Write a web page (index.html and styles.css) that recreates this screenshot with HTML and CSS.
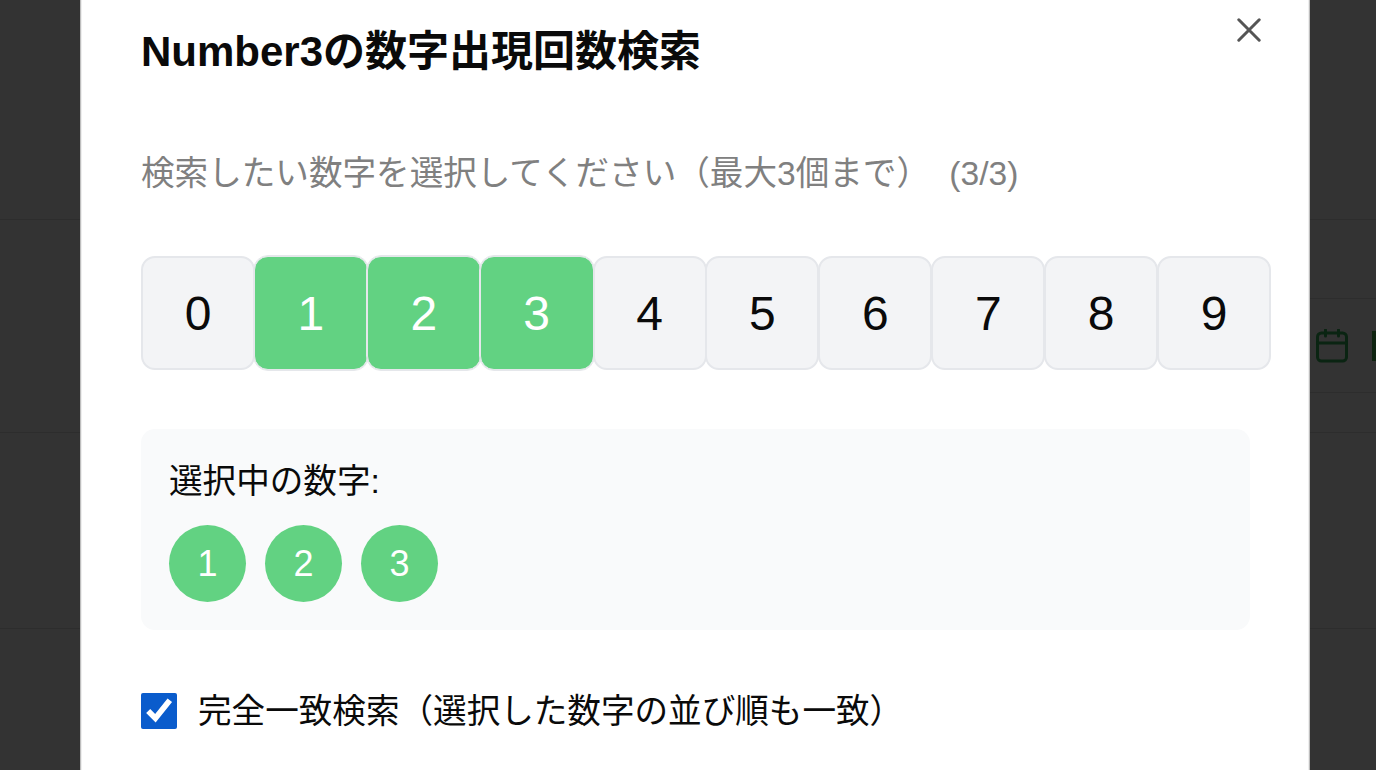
FILE: index.html
```html
<!DOCTYPE html>
<html lang="ja">
<head>
    <title>Number3の数字出現回数検索</title>
    <link rel="stylesheet" href="styles.css">
</head>
<body>
    <div class="page">
        <div class="row row-head"></div>
        <div class="row row-tabs">
            <div class="band band-a"></div>
            <div class="band band-b">
                <div class="page-icons">
                    <svg class="cal-icon" viewBox="0 0 32 34" width="32" height="34">
                        <rect x="1.5" y="4" width="29" height="28" rx="4"></rect>
                        <path d="M1.5 14h29M9.500 1v6M22.500 1v6"></path>
                    </svg>
                    <span class="cal-next"></span>
                </div>
            </div>
            <div class="band band-c"></div>
        </div>
        <div class="row row-body"></div>
    </div>

    <div class="overlay">
        <div class="modal">
            <button class="close-btn" type="button" aria-label="閉じる">
                <svg viewBox="0 0 24 24" width="24" height="24">
                    <path d="M1.800 1.800l20.400 20.400M22.200 1.800l-20.400 20.400"></path>
                </svg>
            </button>
            <h2 class="modal-title">Number3の数字出現回数検索</h2>
            <p class="hint">検索したい数字を選択してください（最大3個まで） <span class="hint-count">(3/3)</span></p>
            <div class="digit-grid">
                <button class="digit" type="button">0</button>
                <button class="digit is-on" type="button">1</button>
                <button class="digit is-on" type="button">2</button>
                <button class="digit is-on" type="button">3</button>
                <button class="digit" type="button">4</button>
                <button class="digit" type="button">5</button>
                <button class="digit" type="button">6</button>
                <button class="digit" type="button">7</button>
                <button class="digit" type="button">8</button>
                <button class="digit" type="button">9</button>
            </div>
            <div class="selected-panel">
                <div class="selected-label">選択中の数字:</div>
                <div class="selected-list">
                    <span class="ball">1</span>
                    <span class="ball">2</span>
                    <span class="ball">3</span>
                </div>
            </div>
            <label class="exact-row">
                <input type="checkbox" class="exact-check" checked>
                <span class="exact-text">完全一致検索（選択した数字の並び順も一致）</span>
            </label>
        </div>
    </div>
</body>
</html>
```

FILE: styles.css
```css
* {
    box-sizing: border-box;
}

html,
body {
    height: 100%;
}

body {
    margin: 0;
    overflow: hidden;
    background-color: #333;
    font-family: "Liberation Sans", Arial, "Noto Sans CJK JP", sans-serif;
    color: #0a0a0a;
}

.page {
    height: 100%;
}

.row {
    border-bottom: 1px solid #2d2d2d;
}

.row-head {
    height: 220px;
}

.row-tabs {
    height: 213px;
}

.band {
    margin-left: 400px;
    border-bottom: 1px solid #2d2d2d;
}

.band-a {
    height: 79px;
}

.band-b {
    height: 94px;
    display: flex;
    justify-content: flex-end;
    align-items: center;
}

.page-icons {
    display: flex;
    align-items: center;
    gap: 24px;
    margin-right: -4px;
    width: 64px;
}

.cal-icon {
    flex: none;
    fill: none;
    stroke: #0a2412;
    stroke-width: 3;
    stroke-linecap: round;
}

.cal-next {
    flex: none;
    width: 8px;
    height: 30px;
    background-color: #0f2410;
}

.band-c {
    border-bottom: 0;
}

.row-body {
    height: 196px;
}

.overlay {
    position: fixed;
    top: 0;
    left: 0;
    right: 0;
    bottom: 0;
    display: flex;
    justify-content: center;
    align-items: flex-start;
    padding-left: 14px;
}

.modal {
    position: relative;
    flex: none;
    width: 1230px;
    height: 770px;
    padding: 30px 59px 0 60px;
    background-color: #fff;
    border-left: 1px solid #bdbdbd;
    border-right: 1px solid #bdbdbd;
    box-shadow: inset 1px 0 #eee, inset -1px 0 #eee;
}

.close-btn {
    position: absolute;
    top: 18px;
    right: 48px;
    display: flex;
    padding: 0;
    background: none;
    border: none;
}

.close-btn path {
    fill: none;
    stroke: #555;
    stroke-width: 3;
    stroke-linecap: round;
}

.modal-title {
    margin: 0;
    font-size: 42px;
    line-height: 44px;
    font-weight: 700;
}

.hint {
    margin: 78px 0 0;
    font-size: 33.6px;
    line-height: 44px;
    color: #808080;
    white-space: nowrap;
}

.hint-count {
    margin-left: 10px;
}

.digit-grid {
    display: grid;
    grid-template-columns: repeat(10, 112.9px);
    margin-top: 60px;
}

.digit {
    width: 114px;
    height: 114px;
    padding: 0;
    font-family: inherit;
    font-size: 48px;
    color: #0a0a0a;
    background-color: #f3f4f6;
    border: 2px solid #e5e7eb;
    border-radius: 14px;
}

.digit.is-on {
    color: #fff;
    background-color: #62d282;
    border-width: 1px;
    outline: 1px solid #e5e7eb;
    outline-offset: 0;
}

.selected-panel {
    margin-top: 59px;
    height: 201px;
    padding: 28px;
    background-color: #f9fafb;
    border-radius: 14px;
}

.selected-label {
    font-size: 33.6px;
    line-height: 50px;
}

.selected-list {
    display: flex;
    gap: 19px;
    margin-top: 18px;
}

.ball {
    display: flex;
    justify-content: center;
    align-items: center;
    width: 77px;
    height: 77px;
    font-size: 36px;
    color: #fff;
    background-color: #62d282;
    border-radius: 50%;
}

.exact-row {
    display: flex;
    align-items: center;
    gap: 21px;
    margin-top: 58px;
    font-size: 33.6px;
    line-height: 44px;
}

.exact-check {
    flex: none;
    width: 36px;
    height: 36px;
    margin: 0;
    accent-color: #0a5ccc;
}

.exact-text {
    margin-top: 2px;
}
```
